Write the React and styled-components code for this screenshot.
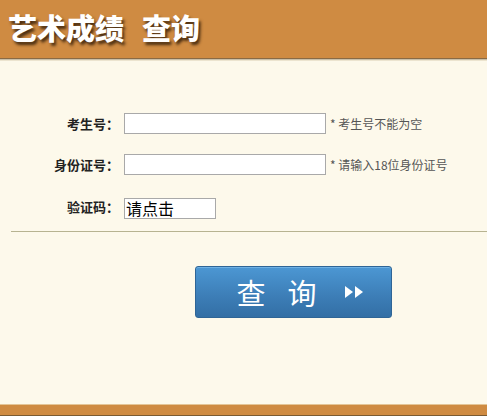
import React from "react";
import styled, { createGlobalStyle } from "styled-components";

const GlobalStyle = createGlobalStyle`
  html, body {
    margin: 0;
    padding: 0;
    background: #fdf9eb;
  }
  body {
    font-family: "Microsoft YaHei", "Noto Sans CJK SC", sans-serif;
  }
`;

const Page = styled.div`
  width: 487px;
  height: 416px;
  display: flex;
  flex-direction: column;
  background: #fdf9eb;
  overflow: hidden;
`;

const Header = styled.div`
  height: 58px;
  background: #cf8b42;
  border-bottom: 1px solid #8a6a44;
  box-shadow: 0 1px 0 #c9bfa8, 0 2px 0 #ece4cf;
  display: flex;
  align-items: center;
  padding-left: 8px;
  flex-shrink: 0;
`;

const Title = styled.h1`
  margin: 0;
  margin-top: -4px;
  display: flex;
  gap: 18px;
  font-family: "Noto Sans CJK SC", sans-serif;
  font-size: 29px;
  font-weight: 900;
  color: #fff;
  text-shadow: 2px 3px 3px #4a2e12;
`;

const Body = styled.div`
  flex: 1;
  padding-top: 54px;
  display: flex;
  flex-direction: column;
`;

const Form = styled.div`
  display: grid;
  grid-template-columns: 119px auto;
  row-gap: 20px;
  align-items: center;
`;

const Label = styled.div`
  text-align: right;
  font-family: "Noto Sans CJK SC", sans-serif;
  font-size: 13px;
  font-weight: bold;
  color: #222;
  line-height: 20px;
`;

const Field = styled.div`
  display: flex;
  align-items: center;
  padding-left: 5px;
`;

const Input = styled.input`
  box-sizing: border-box;
  width: 202px;
  height: 21px;
  border: 1px solid #a9a9a9;
  background: #fff;
  margin: 0;
  padding: 0 3px;
`;

const Hint = styled.span`
  margin-left: 4px;
  font-family: "Noto Sans CJK SC", sans-serif;
  font-size: 12px;
  color: #555;
`;

const Captcha = styled.div`
  box-sizing: border-box;
  width: 92px;
  height: 21px;
  border: 1px solid #a9a9a9;
  background: #fff;
  font-family: "Noto Sans CJK SC", sans-serif;
  font-size: 16px;
  line-height: 18px;
  color: #000;
  padding-left: 1px;
  margin-top: 3px;
`;

const Divider = styled.hr`
  margin: 12px 0 0 11px;
  border: none;
  border-top: 1px solid #b7b391;
  height: 0;
`;

const ButtonRow = styled.div`
  display: flex;
  padding-left: 195px;
  padding-top: 34px;
`;

const QueryButton = styled.button`
  box-sizing: border-box;
  width: 197px;
  height: 52px;
  border: 1px solid #2f6596;
  border-radius: 3px;
  background: linear-gradient(#4c97d3, #3c7db6 60%, #336fa5);
  box-shadow: inset 0 1px 0 #6eb0e3;
  color: #fff;
  font-family: "Noto Sans CJK SC", sans-serif;
  font-size: 29px;
  display: flex;
  align-items: center;
  justify-content: center;
  gap: 4px;
  padding: 0 0 0 14px;
  cursor: pointer;
`;

const ButtonText = styled.span`
  letter-spacing: 22px;
  line-height: 1;
`;

const Footer = styled.div`
  height: 10px;
  flex-shrink: 0;
  background: #cf8b42;
  border-top: 1px solid #e4c596;
  border-bottom: 1px solid #7a5a32;
`;

const Arrows = () => (
  <svg width="22" height="16" viewBox="0 0 22 16">
    <path d="M2 2 L10 8 L2 14 Z" fill="#fff" />
    <path d="M12 2 L20 8 L12 14 Z" fill="#fff" />
  </svg>
);

export default function App() {
  return (
    <>
      <GlobalStyle />
      <Page>
        <Header>
          <Title>
            <span>艺术成绩</span>
            <span>查询</span>
          </Title>
        </Header>
        <Body>
          <Form>
            <Label>考生号：</Label>
            <Field>
              <Input type="text" />
              <Hint>* 考生号不能为空</Hint>
            </Field>
            <Label>身份证号：</Label>
            <Field>
              <Input type="text" />
              <Hint>* 请输入18位身份证号</Hint>
            </Field>
            <Label>验证码：</Label>
            <Field>
              <Captcha>请点击</Captcha>
            </Field>
          </Form>
          <Divider />
          <ButtonRow>
            <QueryButton>
              <ButtonText>查询</ButtonText>
              <Arrows />
            </QueryButton>
          </ButtonRow>
        </Body>
        <Footer />
      </Page>
    </>
  );
}
